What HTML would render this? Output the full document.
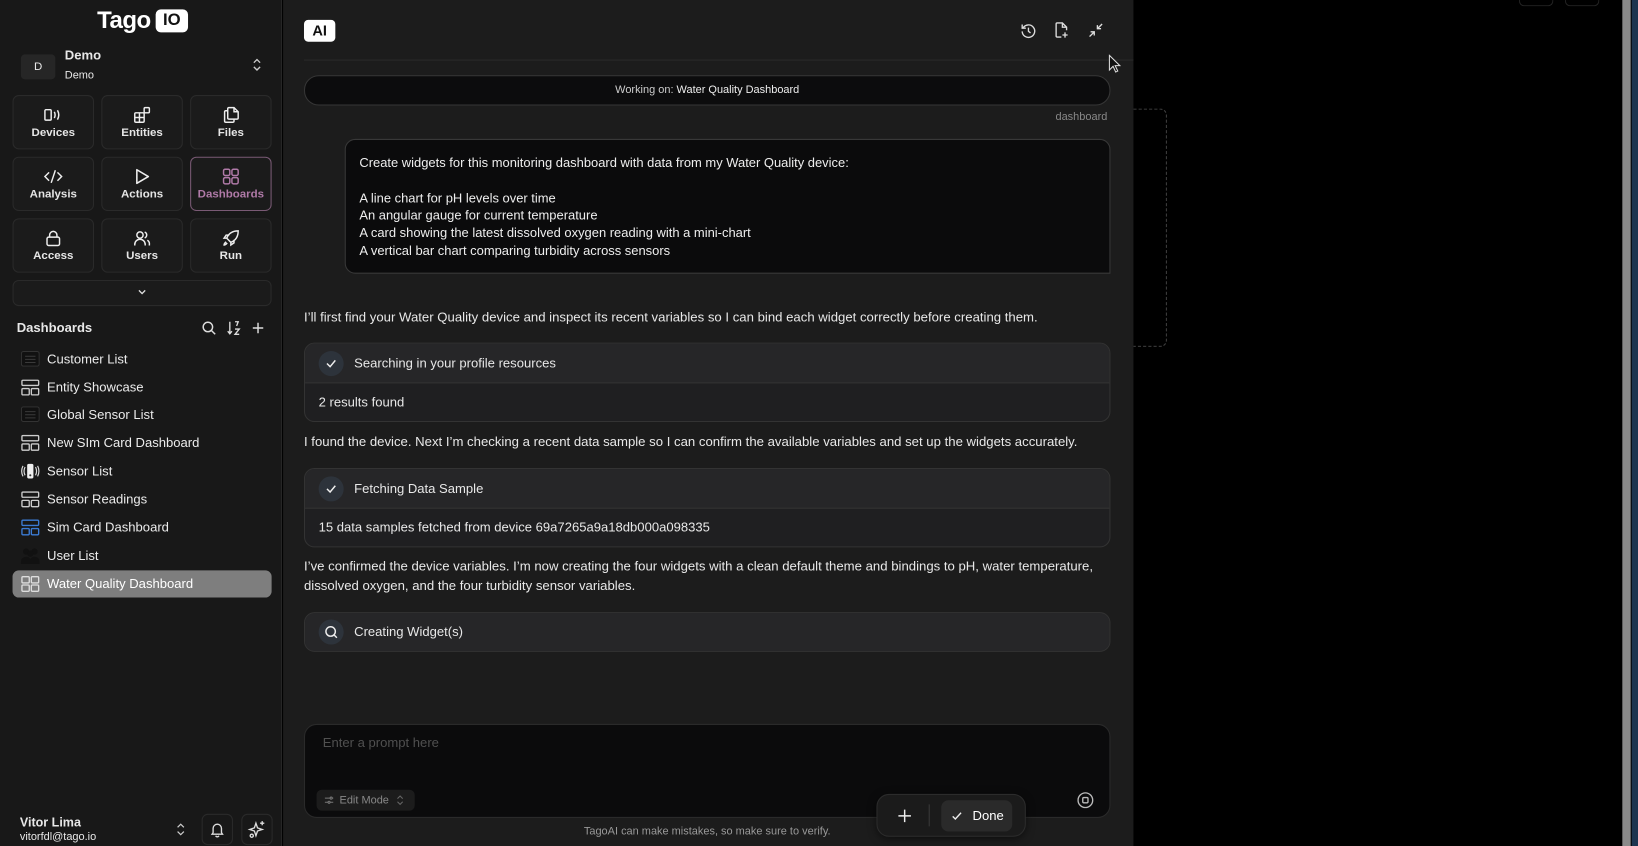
<!DOCTYPE html>
<html><head><meta charset="utf-8"><style>
*{box-sizing:border-box;margin:0;padding:0}
html,body{width:1638px;height:846px;overflow:hidden;background:#000}
#w{position:absolute;left:0;top:0;width:1568px;height:810px;transform:scale(1.04464);transform-origin:0 0;font-family:"Liberation Sans",sans-serif;color:#e8e8e8}
.a{position:absolute}
.sb{left:0;top:0;width:270px;height:810px;background:#181818;border-right:1px solid #262626}
.tile{position:absolute;width:78px;height:52px;background:#1b1b1b;border:1px solid #2a2a2a;border-radius:6px;text-align:center;font-size:11px;font-weight:bold;color:#e6e6e6}
.tile svg{display:block;margin:10px auto 3px}
.li{position:absolute;left:12px;width:248px;height:26px;font-size:12.5px;line-height:26px;padding-left:33px;color:#ececec}
.li svg{position:absolute;left:8px;top:5px}
.card{position:absolute;left:291px;width:772px;border:1px solid #333;border-radius:10px;overflow:hidden;background:#1f1f21}
.ch{height:38px;background:#262628;border-bottom:1px solid #333;font-size:12.5px;line-height:38px;padding-left:47px;position:relative}
.ck{position:absolute;left:13px;top:7px;width:24px;height:24px;border-radius:12px;background:#2d333b}
.cb{height:37px;font-size:12.5px;line-height:36px;padding-left:13px}
.p{position:absolute;left:291px;font-size:12.6px;line-height:19px;color:#e8e8e8}
</style></head><body><div id="w">
<div class="a" style="left:0;top:0;width:3px;height:810px;background:#1f4f86"></div>
<div class="a sb"></div>
<div class="a" style="left:93px;top:6px;font-size:23px;font-weight:bold;color:#fff;letter-spacing:-0.5px">Tago</div>
<div class="a" style="left:149px;top:9px;width:31px;height:22px;background:#fff;border-radius:5px;color:#111;font-weight:bold;font-size:16px;text-align:center;line-height:22px">IO</div>
<div class="a" style="left:20px;top:52px;width:33px;height:24px;background:#262626;border-radius:4px;font-size:11px;text-align:center;line-height:24px">D</div>
<div class="a" style="left:62px;top:46px;font-size:12.5px;font-weight:bold">Demo</div>
<div class="a" style="left:62px;top:66px;font-size:10.5px">Demo</div>
<svg class="a" style="left:241px;top:55px" width="10" height="14" viewBox="0 0 10 14" fill="none" stroke="#ccc" stroke-width="1.3"><path d="M2 5l3-3 3 3M2 9l3 3 3-3"/></svg>

<div class="tile" style="left:12px;top:91px"><svg width="18" height="16" viewBox="0 -1 18 16" fill="none" stroke="#eee" stroke-width="1.4"><rect x="1" y="2" width="6" height="10" rx="1"/><path d="M10 4q1.5 3 0 6M13 2.5q2.5 4.5 0 9"/></svg>Devices</div>
<div class="tile" style="left:97px;top:91px"><svg width="16" height="16" viewBox="0 0 16 16" fill="none" stroke="#eee" stroke-width="1.4"><rect x="1" y="6" width="9" height="9" rx="1"/><path d="M1 10.5h9M5.5 6v9"/><rect x="10" y="1" width="5" height="5" rx="1"/></svg>Entities</div>
<div class="tile" style="left:182px;top:91px"><svg width="16" height="16" viewBox="0 0 16 16" fill="none" stroke="#eee" stroke-width="1.4"><path d="M6 1h5l4 4v6a1 1 0 0 1-1 1H6a1 1 0 0 1-1-1V2a1 1 0 0 1 1-1zM11 1v4h4M5 4H3a1 1 0 0 0-1 1v9a1 1 0 0 0 1 1h7a1 1 0 0 0 1-1v-2"/></svg>Files</div>
<div class="tile" style="left:12px;top:150px"><svg width="18" height="16" viewBox="0 -1 18 16" fill="none" stroke="#eee" stroke-width="1.4"><path d="M5 3L1 7l4 4M13 3l4 4-4 4M11 1L7 13"/></svg>Analysis</div>
<div class="tile" style="left:97px;top:150px"><svg width="16" height="16" viewBox="0 0 16 16" fill="none" stroke="#eee" stroke-width="1.5"><path d="M3 1.5v13l11-6.5z" stroke-linejoin="round"/></svg>Actions</div>
<div class="tile" style="left:182px;top:150px;border-color:#7a5a75;color:#b07aa8"><svg width="16" height="16" viewBox="0 0 16 16" fill="none" stroke="#b07aa8" stroke-width="1.4"><rect x="1" y="1" width="6" height="6" rx="1.5"/><rect x="9" y="1" width="6" height="6" rx="1.5"/><rect x="1" y="9" width="6" height="6" rx="1.5"/><rect x="9" y="9" width="6" height="6" rx="1.5"/></svg>Dashboards</div>
<div class="tile" style="left:12px;top:209px"><svg width="16" height="16" viewBox="0 0 16 16" fill="none" stroke="#eee" stroke-width="1.4"><rect x="2" y="7" width="12" height="8" rx="1.5"/><path d="M4.5 7V5a3.5 3.5 0 0 1 7 0v2"/></svg>Access</div>
<div class="tile" style="left:97px;top:209px"><svg width="16" height="16" viewBox="0 0 16 16" fill="none" stroke="#eee" stroke-width="1.4"><circle cx="6" cy="5" r="3"/><path d="M1 15v-1a5 5 0 0 1 10 0v1M10.5 2.2a3 3 0 0 1 0 5.6M13 10a4 4 0 0 1 2 4v1"/></svg>Users</div>
<div class="tile" style="left:182px;top:209px"><svg width="16" height="16" viewBox="0 0 16 16" fill="none" stroke="#eee" stroke-width="1.4"><path d="M6 10l-2-2c2-5 6-7 11-7 0 5-2 9-7 11zM4 8H1.5l2-3h3M8 12v2.5l3-2v-3M3.5 11.5Q1.5 13 1.5 14.5 3 14.5 4.5 12.5"/></svg>Run</div>
<div class="a" style="left:12px;top:268px;width:248px;height:25px;background:#1b1b1b;border:1px solid #2a2a2a;border-radius:6px"></div>
<svg class="a" style="left:131px;top:276px" width="10" height="8" viewBox="0 0 10 8" fill="none" stroke="#ddd" stroke-width="1.3"><path d="M2 2l3 3 3-3"/></svg>

<div class="a" style="left:16px;top:307px;font-size:12.5px;font-weight:bold">Dashboards</div>
<svg class="a" style="left:193px;top:307px" width="14" height="14" viewBox="0 0 14 14" fill="none" stroke="#ddd" stroke-width="1.4"><circle cx="6" cy="6" r="4.5"/><path d="M9.5 9.5L13 13"/></svg>
<svg class="a" style="left:217px;top:307px" width="14" height="14" viewBox="0 0 14 14" fill="none" stroke="#ddd" stroke-width="1.3"><path d="M3 1v11M1 10l2 2.5L5 10M8 1h3l-1.5 4M8 8h4L8 13h4"/></svg>
<svg class="a" style="left:240px;top:307px" width="14" height="14" viewBox="0 0 14 14" fill="none" stroke="#ddd" stroke-width="1.4"><path d="M7 2v10M2 7h10"/></svg>

<div class="li" style="top:331px"><svg width="18" height="15" viewBox="0 0 18 15"><rect x="0.5" y="0.5" width="17" height="14" rx="2" fill="#111" stroke="#333"/><path d="M4 5h10M4 8h10M4 11h10" stroke="#3a3a3a"/></svg>Customer List</div>
<div class="li" style="top:358px"><svg width="18" height="16" viewBox="0 0 18 16" fill="none" stroke="#ccc" stroke-width="1.3"><rect x="1" y="1" width="16" height="5" rx="1"/><rect x="1" y="9" width="7" height="6" rx="1"/><rect x="10" y="9" width="7" height="6" rx="1"/></svg>Entity Showcase</div>
<div class="li" style="top:384px"><svg width="18" height="15" viewBox="0 0 18 15"><rect x="0.5" y="0.5" width="17" height="14" rx="2" fill="#111" stroke="#333"/><path d="M4 5h10M4 8h10M4 11h10" stroke="#3a3a3a"/></svg>Global Sensor List</div>
<div class="li" style="top:411px"><svg width="18" height="16" viewBox="0 0 18 16" fill="none" stroke="#ccc" stroke-width="1.3"><rect x="1" y="1" width="16" height="5" rx="1"/><rect x="1" y="9" width="7" height="6" rx="1"/><rect x="10" y="9" width="7" height="6" rx="1"/></svg>New SIm Card Dashboard</div>
<div class="li" style="top:438px"><svg width="18" height="16" viewBox="0 0 18 16"><rect x="6" y="1" width="6" height="14" rx="1.5" fill="#eee"/><circle cx="9" cy="12" r="1" fill="#333"/><path d="M4 4q-2 4 0 8M14 4q2 4 0 8M2 3q-2.5 5 0 10M16 3q2.5 5 0 10" stroke="#ddd" fill="none" stroke-width="1.1"/></svg>Sensor List</div>
<div class="li" style="top:465px"><svg width="18" height="16" viewBox="0 0 18 16" fill="none" stroke="#ccc" stroke-width="1.3"><rect x="1" y="1" width="16" height="5" rx="1"/><rect x="1" y="9" width="7" height="6" rx="1"/><rect x="10" y="9" width="7" height="6" rx="1"/></svg>Sensor Readings</div>
<div class="li" style="top:492px"><svg width="18" height="16" viewBox="0 0 18 16" fill="none" stroke="#3b7bd4" stroke-width="1.3"><rect x="1" y="1" width="16" height="5" rx="1"/><rect x="1" y="9" width="7" height="6" rx="1"/><rect x="10" y="9" width="7" height="6" rx="1"/></svg>Sim Card Dashboard</div>
<div class="li" style="top:519px"><svg width="18" height="16" viewBox="0 0 18 16" fill="#111"><circle cx="5" cy="4" r="3"/><circle cx="13" cy="4" r="3"/><circle cx="9" cy="6" r="3"/><path d="M0 14a5 5 0 0 1 9-3 5 5 0 0 1 9 3v2H0z"/></svg>User List</div>
<div class="li" style="top:546px;background:#7e7e7e;border-radius:6px;color:#fff"><svg width="18" height="16" viewBox="0 0 18 16" fill="none" stroke="#ddd" stroke-width="1.3"><rect x="1" y="1" width="7" height="6" rx="1"/><rect x="10" y="1" width="7" height="6" rx="1"/><rect x="1" y="9" width="7" height="6" rx="1"/><rect x="10" y="9" width="7" height="6" rx="1"/></svg>Water Quality Dashboard</div>

<div class="a" style="left:19px;top:780px;font-size:12px;font-weight:bold">Vitor Lima</div>
<div class="a" style="left:19px;top:795px;font-size:10.5px">vitorfdl@tago.io</div>
<svg class="a" style="left:168px;top:787px" width="10" height="14" viewBox="0 0 10 14" fill="none" stroke="#ccc" stroke-width="1.2"><path d="M2 5l3-3 3 3M2 9l3 3 3-3"/></svg>
<div class="a" style="left:193px;top:779px;width:30px;height:30px;border:1px solid #2a2a2a;border-radius:6px"></div>
<svg class="a" style="left:201px;top:786px" width="14" height="16" viewBox="0 0 14 16" fill="none" stroke="#ddd" stroke-width="1.3"><path d="M3 11V7a4 4 0 0 1 8 0v4l1 1.5H2zM5.5 14a1.6 1.6 0 0 0 3 0"/></svg>
<div class="a" style="left:231px;top:779px;width:30px;height:30px;border:1px solid #2a2a2a;border-radius:6px"></div>
<svg class="a" style="left:237px;top:785px" width="18" height="18" viewBox="0 0 18 18" fill="none" stroke="#ddd" stroke-width="1.3"><path d="M8 3l1.5 4.5L14 9l-4.5 1.5L8 15l-1.5-4.5L2 9l4.5-1.5zM14 1v4M12 3h4"/><circle cx="4" cy="15" r="1.5"/></svg>

<div class="a" style="left:271px;top:0;width:814px;height:810px;background:#1c1c1c"></div>
<div class="a" style="left:291px;top:19px;width:30px;height:21px;background:#fff;border-radius:4px;color:#111;font-weight:bold;font-size:14px;text-align:center;line-height:21px">AI</div>
<svg class="a" style="left:977px;top:22px" width="15" height="15" viewBox="0 0 15 15" fill="none" stroke="#ddd" stroke-width="1.3"><path d="M2.5 4.5A6 6 0 1 1 1.5 8M1.5 1.5v3.5h3.5M7.5 4.5v3.5l2 1.5"/></svg>
<svg class="a" style="left:1009px;top:21px" width="14" height="16" viewBox="0 0 14 16" fill="none" stroke="#ddd" stroke-width="1.3"><path d="M7 14.5H3a1 1 0 0 1-1-1V2a1 1 0 0 1 1-1h5l4 4v3M8 1v4h4M10.5 10v5M8 12.5h5"/></svg>
<svg class="a" style="left:1042px;top:22px" width="14" height="14" viewBox="0 0 14 14" fill="none" stroke="#ddd" stroke-width="1.3"><path d="M13 1L8.5 5.5M8.5 2v3.5H12M1 13l4.5-4.5M2 8.5h3.5V12"/></svg>
<div class="a" style="left:291px;top:57px;width:794px;height:1px;background:#2a2a2a"></div>
<div class="a" style="left:291px;top:72px;width:772px;height:29px;background:#0c0c0d;border:1px solid #363636;border-radius:14px;font-size:10.5px;text-align:center;line-height:27px;color:#ccc">Working on: <span style="color:#eee">Water Quality Dashboard</span></div>
<div class="a" style="left:990px;top:106px;width:70px;text-align:right;font-size:10.5px;color:#888">dashboard</div>
<div class="a" style="left:330px;top:133px;width:733px;height:129px;background:#0b0b0c;border:1px solid #383838;border-radius:10px 10px 0 10px;padding:14px 13px;font-size:12.4px;line-height:16.8px;color:#eee">Create widgets for this monitoring dashboard with data from my Water Quality device:<br><br>A line chart for pH levels over time<br>An angular gauge for current temperature<br>A card showing the latest dissolved oxygen reading with a mini-chart<br>A vertical bar chart comparing turbidity across sensors</div>

<div class="p" style="top:295px">I’ll first find your Water Quality device and inspect its recent variables so I can bind each widget correctly before creating them.</div>
<div class="card" style="top:328px;height:76px"><div class="ch"><div class="ck"><svg width="24" height="24" viewBox="0 0 24 24" fill="none" stroke="#eee" stroke-width="1.4"><path d="M8 12l3 3 5-6"/></svg></div>Searching in your profile resources</div><div class="cb">2 results found</div></div>
<div class="p" style="top:414px">I found the device. Next I’m checking a recent data sample so I can confirm the available variables and set up the widgets accurately.</div>
<div class="card" style="top:448px;height:76px"><div class="ch"><div class="ck"><svg width="24" height="24" viewBox="0 0 24 24" fill="none" stroke="#eee" stroke-width="1.4"><path d="M8 12l3 3 5-6"/></svg></div>Fetching Data Sample</div><div class="cb">15 data samples fetched from device 69a7265a9a18db000a098335</div></div>
<div class="p" style="top:533px">I’ve confirmed the device variables. I’m now creating the four widgets with a clean default theme and bindings to pH, water temperature,<br>dissolved oxygen, and the four turbidity sensor variables.</div>
<div class="card" style="top:586px;height:38px"><div class="ch" style="border:none;height:36px;line-height:36px"><div class="ck" style="top:6px"><svg width="24" height="24" viewBox="0 0 24 24" fill="none" stroke="#eee" stroke-width="1.4"><circle cx="11.5" cy="11.5" r="4.5"/><path d="M15 15l2.5 2.5"/></svg></div>Creating Widget(s)</div></div>

<div class="a" style="left:291px;top:693px;width:772px;height:90px;background:#0b0b0c;border:1px solid #2a2a2a;border-radius:12px"></div>
<div class="a" style="left:309px;top:704px;font-size:12.5px;color:#505050">Enter a prompt here</div>
<div class="a" style="left:303px;top:756px;width:94px;height:20px;background:#1c1c1c;border-radius:5px;font-size:10.5px;line-height:20px;color:#888;padding-left:22px">Edit Mode</div>
<svg class="a" style="left:310px;top:761px" width="10" height="10" viewBox="0 0 10 10" fill="none" stroke="#777" stroke-width="1"><path d="M1 3h5M1 7h3M8 3h1M6 7h3"/><circle cx="7" cy="3" r="1"/><circle cx="5" cy="7" r="1"/></svg>
<svg class="a" style="left:379px;top:760px" width="8" height="12" viewBox="0 0 8 12" fill="none" stroke="#666" stroke-width="1"><path d="M1.5 4.5L4 2l2.5 2.5M1.5 7.5L4 10l2.5-2.5"/></svg>
<svg class="a" style="left:1031px;top:758px" width="16" height="16" viewBox="0 0 16 16" fill="none" stroke="#bbb" stroke-width="1.3"><circle cx="8" cy="8" r="7"/><rect x="5.5" y="5.5" width="5" height="5" rx="1"/></svg>
<div class="a" style="left:839px;top:760px;width:143px;height:41px;background:#1b1b1b;border:1px solid #2c2c2c;border-radius:12px;box-shadow:0 2px 8px rgba(0,0,0,.5)"></div>
<svg class="a" style="left:859px;top:774px" width="14" height="14" viewBox="0 0 14 14" fill="none" stroke="#eee" stroke-width="1.4"><path d="M7 1v12M1 7h12"/></svg>
<div class="a" style="left:889px;top:770px;width:1px;height:21px;background:#3a3a3a"></div>
<div class="a" style="left:901px;top:766px;width:68px;height:30px;background:#2a2a2a;border-radius:7px;font-size:12.5px;line-height:30px;padding-left:30px;color:#fff">Done</div>
<svg class="a" style="left:910px;top:775px" width="12" height="12" viewBox="0 0 12 12" fill="none" stroke="#eee" stroke-width="1.3"><path d="M2 6.5l2.5 2.5L10 3"/></svg>
<div class="a" style="left:291px;top:790px;width:772px;text-align:center;font-size:10.5px;color:#999">TagoAI can make mistakes, so make sure to verify.</div>

<div class="a" style="left:1085px;top:104px;width:32px;height:228px;border:1px dashed #444;border-left:none;border-radius:0 6px 6px 0"></div>
<svg class="a" style="left:1061px;top:52px" width="12" height="18" viewBox="0 0 12 18"><path d="M1 1v14l3.5-3.5 2.5 5.5 2-1-2.5-5.2H11z" fill="#111" stroke="#ddd" stroke-width="1"/></svg>
<div class="a" style="left:1454px;top:0;width:33px;height:6px;border:1px solid #222;border-top:none;border-radius:0 0 5px 5px"></div>
<div class="a" style="left:1498px;top:0;width:33px;height:6px;border:1px solid #222;border-top:none;border-radius:0 0 5px 5px"></div>
<div class="a" style="left:1553px;top:0;width:8px;height:810px;background:#8a8a8a"></div>
<div class="a" style="left:1562px;top:0;width:6px;height:810px;background:#1d3550"></div>
</div></body></html>
